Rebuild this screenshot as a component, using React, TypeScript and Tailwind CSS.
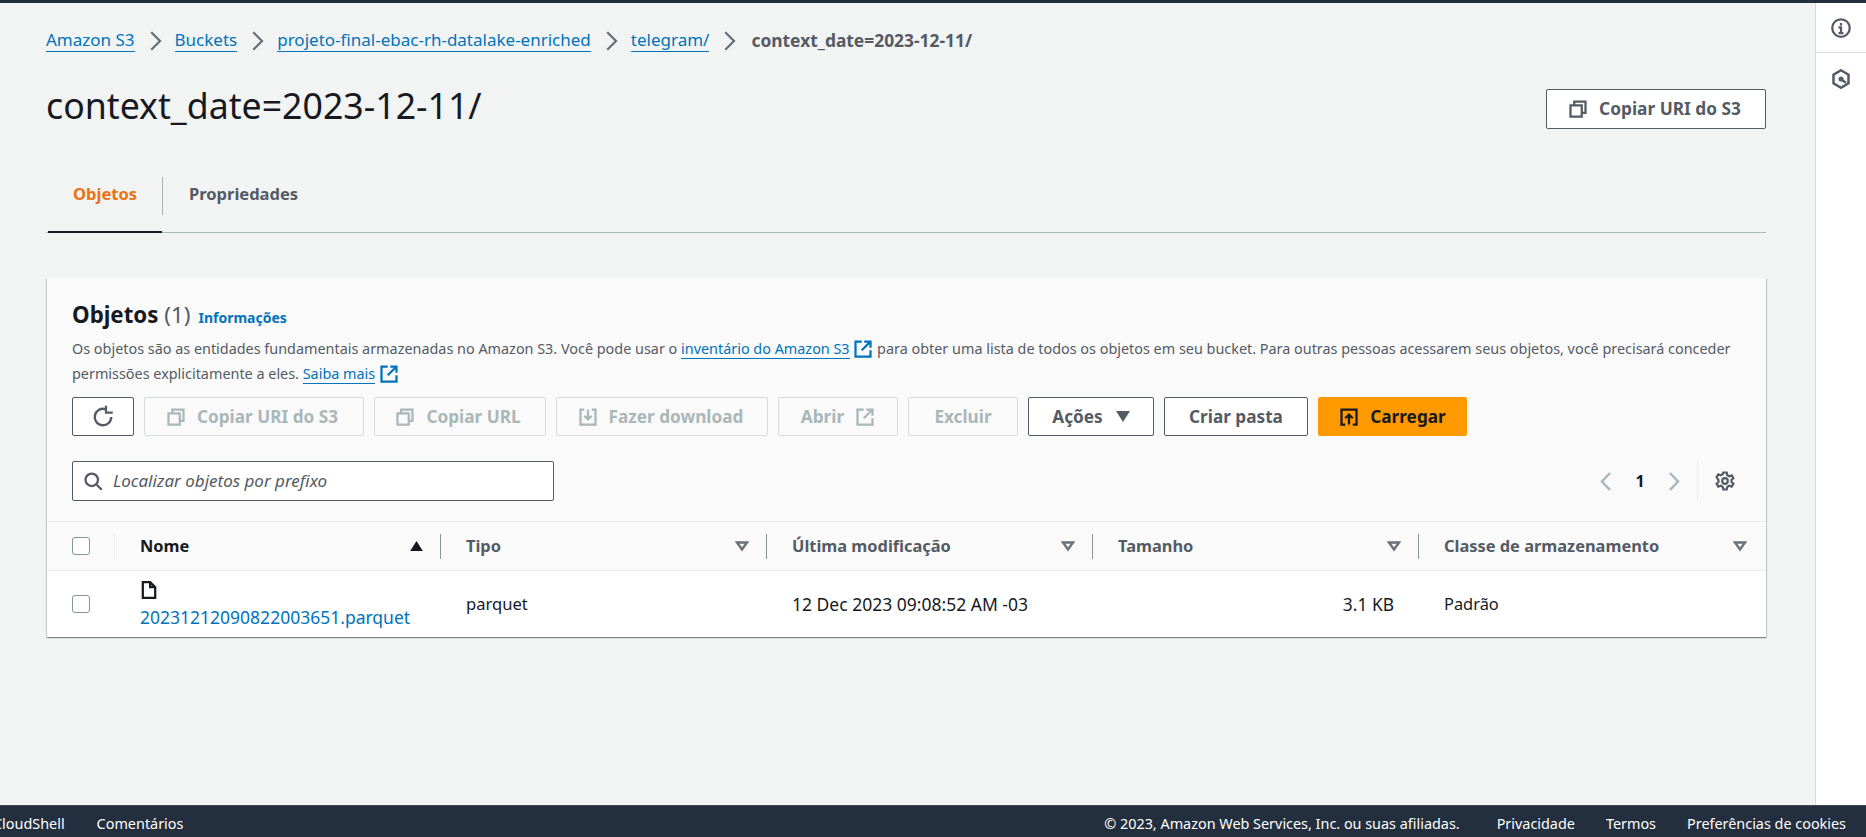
import { ReactNode } from 'react';

const fontStack = { fontFamily: '"Noto Sans", sans-serif' };

function Icon({ children, className = 'w-5 h-5' }: { children: ReactNode; className?: string }) {
  return (
    <svg viewBox="0 0 16 16" fill="none" stroke="currentColor" strokeWidth="1.800" className={`${className} shrink-0`}>
      {children}
    </svg>
  );
}

const CopyIcon = () => (
  <Icon>
    <path d="M2 5h9v9H2z" />
    <path d="M5 5V2h9v9h-3" />
  </Icon>
);

const ExternalIcon = () => (
  <Icon>
    <path d="M14 9v5H2V2h5" />
    <path d="M9 2h5v5M14 2 7 9" />
  </Icon>
);

const Chevron = () => (
  <svg viewBox="0 0 16 16" fill="none" stroke="currentColor" strokeWidth="1.800" className="w-5 h-5 text-[#687078] mx-[10px] shrink-0">
    <path d="m5 1 7 7-7 7" />
  </svg>
);

const FilterCaret = () => (
  <svg viewBox="0 0 14 11" fill="none" stroke="#687078" strokeWidth="2.400" className="w-[14px] h-[11px] shrink-0">
    <path d="M2 1.500h10l-5 7z" />
  </svg>
);

function Crumb({ children }: { children: ReactNode }) {
  return <a className="text-[#0073bb] border-b border-[#0073bb] leading-[22px]">{children}</a>;
}

function ToolButton({
  children,
  width,
  disabled,
  primary,
}: {
  children: ReactNode;
  width: string;
  disabled?: boolean;
  primary?: boolean;
}) {
  const tone = primary
    ? 'bg-[#ff9900] border-[#ff9900] text-[#16191f]'
    : disabled
      ? 'border-[#d5dbdb] text-[#aab7b8] bg-transparent'
      : 'border-[#545b64] text-[#545b64] bg-white';
  return (
    <button className={`${width} h-[39px] flex items-center justify-center gap-[11px] rounded-[2px] border text-[17.200px] font-bold ${tone}`}>
      {children}
    </button>
  );
}

function HeaderCell({ label, divider = true, dark, last }: { label: string; divider?: boolean; dark?: boolean; last?: boolean }) {
  return (
    <div className="flex items-center h-full">
      <div className={`flex-1 flex items-center justify-between h-full pl-[25px] ${last ? 'pr-[19px]' : 'pr-[17px]'}`}>
        <span className={`font-bold text-[16.400px] ${dark ? 'text-[#16191f]' : 'text-[#545b64]'}`}>{label}</span>
        {dark ? (
          <svg viewBox="0 0 14 11" className="w-[13px] h-[10px] shrink-0 fill-[#16191f]">
            <path d="M0 11 7 0l7 11z" />
          </svg>
        ) : (
          <FilterCaret />
        )}
      </div>
      {divider && <div className="w-px h-[25px] bg-[#879596]" />}
    </div>
  );
}

export default function App() {
  return (
    <div className="h-[837px] w-[1866px] overflow-hidden flex flex-col bg-[#f2f3f3] text-[#16191f]" style={fontStack}>
      <div className="h-[3px] bg-[#232f3e] shrink-0" />

      <div className="flex-1 flex min-h-0">
        <main className="flex-1 min-w-0 pl-[46px] pr-[49px]">
          {/* breadcrumb */}
          <nav className="flex items-center h-[23px] mt-[26px] text-[17px]">
            <Crumb>Amazon S3</Crumb>
            <Chevron />
            <Crumb>Buckets</Crumb>
            <Chevron />
            <Crumb>projeto-final-ebac-rh-datalake-enriched</Crumb>
            <Chevron />
            <Crumb>telegram/</Crumb>
            <Chevron />
            <span className="text-[#545b64] font-bold text-[17.400px] ml-[2px]">context_date=2023-12-11/</span>
          </nav>

          <div className="flex items-start justify-between mt-[28px]">
            <h1 className="text-[35.700px] leading-[50px] font-normal">context_date=2023-12-11/</h1>
            <button className="mt-[9px] h-10 w-[220px] pr-[3px] flex items-center justify-center gap-[11px] rounded-[2px] border border-[#545b64] bg-white text-[#545b64] text-[17.300px] font-bold">
              <CopyIcon />
              Copiar URI do S3
            </button>
          </div>

          {/* tabs */}
          <div className="flex items-start h-[57px] mt-[46px] border-b border-[#aab7b8]">
            <div className="relative w-[114px] h-[56px] ml-[2px] pt-[7px] text-center leading-[22px] text-[#ec7211] font-bold text-[16.500px]">
              Objetos
              <div className="absolute left-0 right-0 bottom-[-1px] h-[2px] bg-[#16191f]" />
            </div>
            <div className="mt-[1px] w-px h-[38px] bg-[#aab7b8]" />
            <div className="pt-[7px] pl-[26px] leading-[22px] text-[#545b64] font-bold text-[16.500px]">Propriedades</div>
          </div>

          {/* objects card */}
          <section className="mt-[45px] ml-[1px] bg-white shadow-[0_1px_1px_0_rgba(0,28,36,0.3),1px_1px_1px_0_rgba(0,28,36,0.15),-1px_1px_1px_0_rgba(0,28,36,0.15)]">
            <header className="bg-[#fafafa] px-[25px] pt-[22px] pb-[20px] border-b border-[#eaeded]">
              <div className="flex items-baseline gap-[8px] h-[30px]">
                <h2 className="text-[22.300px] leading-[30px] font-bold">
                  Objetos <span className="font-normal text-[#545b64]">(1)</span>
                </h2>
                <a className="text-[#0073bb] font-bold text-[14px]">Informações</a>
              </div>
              <p className="text-[14.400px] leading-[25px] text-[#545b64] mt-[6px]">
                Os objetos são as entidades fundamentais armazenadas no Amazon S3. Você pode usar o{' '}
                <a className="text-[#0073bb] border-b border-[#0073bb]">inventário do Amazon S3</a>{' '}
                <span className="inline-block align-[-5px] text-[#0073bb]"><ExternalIcon /></span> para obter uma lista de
                todos os objetos em seu bucket. Para outras pessoas acessarem seus objetos, você precisará conceder
                permissões explicitamente a eles.{' '}
                <a className="text-[#0073bb] border-b border-[#0073bb]">Saiba mais</a>{' '}
                <span className="inline-block align-[-5px] text-[#0073bb]"><ExternalIcon /></span>
              </p>

              <div className="flex items-center gap-[10px] mt-[11px]">
                <button className="h-[39px] w-[62px] flex items-center justify-center rounded-[2px] border border-[#545b64] bg-white text-[#545b64]">
                  <Icon className="w-6 h-6">
                    <path d="M13.500 8A5.500 5.500 0 1 1 9.500 2.700" strokeWidth="1.600" />
                    <path d="M10 .5V5H14.500" strokeWidth="1.500" />
                  </Icon>
                </button>
                <ToolButton width="w-[220px] pr-[4px]" disabled>
                  <CopyIcon />
                  Copiar URI do S3
                </ToolButton>
                <ToolButton width="w-[172px] pr-[4px]" disabled>
                  <CopyIcon />
                  Copiar URL
                </ToolButton>
                <ToolButton width="w-[212px] pr-[3px]" disabled>
                  <Icon>
                    <path d="M5 2H2v12h12V2h-3M8 2v8M5 7l3 3 3-3" />
                  </Icon>
                  Fazer download
                </ToolButton>
                <ToolButton width="w-[120px]" disabled>
                  Abrir
                  <ExternalIcon />
                </ToolButton>
                <ToolButton width="w-[110px]" disabled>Excluir</ToolButton>
                <ToolButton width="w-[126px]">
                  Ações
                  <svg viewBox="0 0 14 11" className="w-[14px] h-[11px] ml-[2px] fill-[#545b64]">
                    <path d="M0 0h14L7 11z" />
                  </svg>
                </ToolButton>
                <ToolButton width="w-[144px]">Criar pasta</ToolButton>
                <ToolButton width="w-[149px]" primary>
                  <Icon>
                    <path d="M5 14H2V2h12v12h-3M8 14V6M5 9l3-3 3 3" />
                  </Icon>
                  Carregar
                </ToolButton>
              </div>

              <div className="flex items-center justify-between mt-[25px]">
                <div className="h-10 w-[482px] flex items-center gap-[10px] pl-[10px] rounded-[2px] border border-[#545b64] bg-white text-[#545b64]">
                  <Icon className="w-5 h-5">
                    <circle cx="7" cy="7" r="5" />
                    <path d="m11 11 4 4" />
                  </Icon>
                  <span className="italic text-[17px]">Localizar objetos por prefixo</span>
                </div>
                <div className="flex items-center mr-[6px]">
                  <svg viewBox="0 0 11 19" fill="none" stroke="#aab7b8" strokeWidth="2.500" className="w-[11px] h-[19px]">
                    <path d="M10 1 2 9.500l8 8.500" />
                  </svg>
                  <span className="w-[58px] text-center font-bold text-[16px]">1</span>
                  <svg viewBox="0 0 11 19" fill="none" stroke="#aab7b8" strokeWidth="2.500" className="w-[11px] h-[19px]">
                    <path d="m1 1 8 8.500L1 18" />
                  </svg>
                  <div className="w-px h-10 bg-[#eaeded] mx-[17px]" />
                  <svg viewBox="0 0 20 20" fill="none" stroke="#545b64" strokeWidth="2.200" className="w-5 h-5">
                    <circle cx="10" cy="10" r="2.800" />
                    <path d="M8.300 1.500h3.400l.5 2.500 2.100 1.200 2.400-.8 1.700 2.900-1.900 1.700v2l1.900 1.700-1.700 2.900-2.400-.8-2.100 1.200-.5 2.500H8.300l-.5-2.500-2.100-1.200-2.400.8-1.700-2.900 1.900-1.700v-2L1.600 6.300l1.700-2.900 2.400.8 2.100-1.200z" />
                  </svg>
                </div>
              </div>
            </header>

            {/* table */}
            <div className="grid grid-cols-[68px_326px_326px_326px_326px_1fr]">
              <div className="h-[49px] bg-[#fafafa] border-b border-[#eaeded] col-span-6 grid grid-cols-subgrid">
                <div className="flex items-center h-full pl-[25px] justify-between">
                  <span className="w-[18px] h-[18px] rounded-[3px] border border-[#879596] bg-white" />
                  <span className="w-px h-[25px] bg-[#eaeded]" />
                </div>
                <HeaderCell label="Nome" dark />
                <HeaderCell label="Tipo" />
                <HeaderCell label="Última modificação" />
                <HeaderCell label="Tamanho" />
                <HeaderCell label="Classe de armazenamento" divider={false} last />
              </div>

              <div className="h-[66px] flex items-center pl-[25px]">
                <span className="w-[18px] h-[18px] rounded-[3px] border border-[#879596] bg-white" />
              </div>
              <div className="pl-[25px] pt-[10px] flex flex-col items-start">
                <Icon className="w-[18px] h-[18px]">
                  <path d="M2.500 1v14h11V5.500L9 1zM9 1v4.500h4.500" strokeWidth="2" />
                </Icon>
                <a className="text-[#0073bb] mt-[7px] text-[17.500px] leading-[22px]">20231212090822003651.parquet</a>
              </div>
              <div className="pl-[25px] flex items-center text-[16.600px]">parquet</div>
              <div className="pl-[25px] flex items-center text-[17.500px]">12 Dec 2023 09:08:52 AM -03</div>
              <div className="pr-[25px] flex items-center justify-end text-[17.400px]">3.1 KB</div>
              <div className="pl-[25px] flex items-center text-[16.400px]">Padrão</div>
            </div>
          </section>
        </main>

        {/* right rail */}
        <aside className="w-[51px] shrink-0 bg-white border-l border-[#d5dbdb]">
          <div className="h-[50px] flex items-center justify-center border-b border-[#d5dbdb] text-[#545b64]">
            <svg viewBox="0 0 16 16" fill="none" stroke="currentColor" strokeWidth="1.800" className="w-5 h-5">
              <circle cx="8" cy="8" r="7" />
              <path d="M6 7.500h2V12M6 12h4M8 4v2" />
            </svg>
          </div>
          <div className="h-[52px] flex items-center justify-center text-[#545b64]">
            <svg viewBox="0 0 16 16" fill="none" stroke="currentColor" strokeWidth="2" className="w-5 h-5">
              <path d="m8 1 6 3.500v7L8 15l-6-3.500v-7z" />
              <circle cx="8" cy="8" r="2" fill="currentColor" stroke="none" />
              <path d="m9 9 3 2" />
            </svg>
          </div>
        </aside>
      </div>

      {/* footer */}
      <footer className="h-[32px] pt-[5px] bg-[#232f3e] border-t border-[#414750] text-white text-[14.400px] flex items-center justify-between pr-[20px] shrink-0">
        <div className="flex items-center gap-[32px] -ml-[7px]">
          <span>CloudShell</span>
          <span>Comentários</span>
        </div>
        <div className="flex items-center gap-[31px]">
          <span className="mr-[6px]">© 2023, Amazon Web Services, Inc. ou suas afiliadas.</span>
          <span>Privacidade</span>
          <span>Termos</span>
          <span>Preferências de cookies</span>
        </div>
      </footer>
    </div>
  );
}
